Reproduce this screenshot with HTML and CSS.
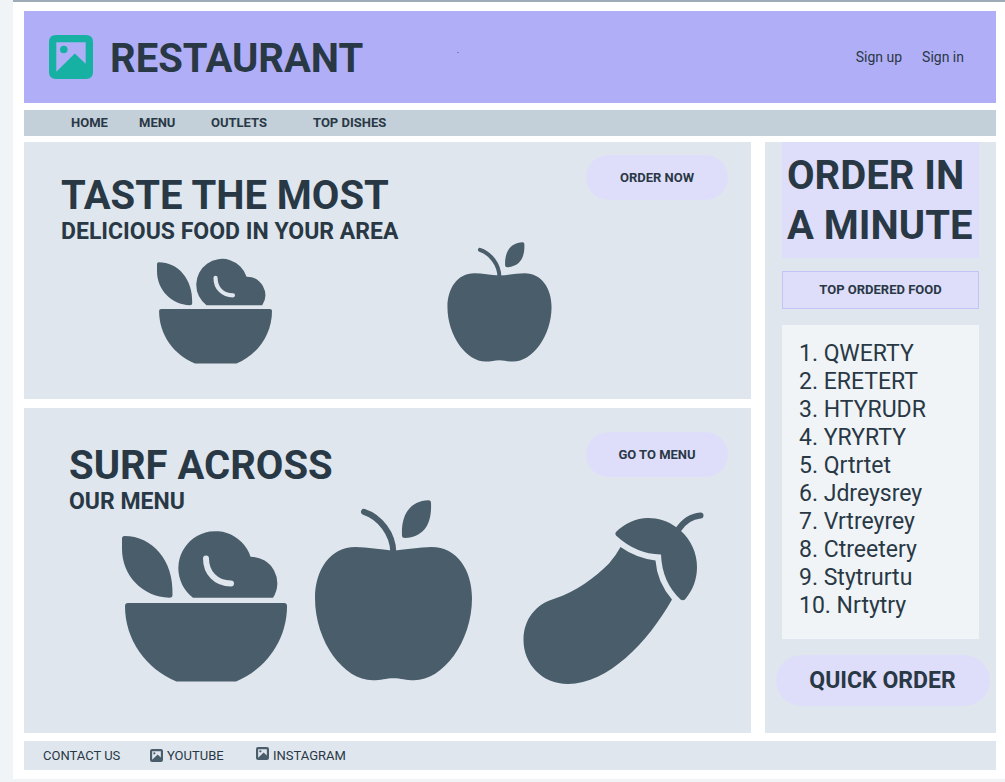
FILE: index.html
```
<!DOCTYPE html>
<html lang="en">
<head>
<meta charset="utf-8">
<title>Restaurant</title>
<link rel="stylesheet" href="styles.css">
</head>
<body>
<svg class="defs" aria-hidden="true">
  <symbol id="picture" viewBox="0 0 44 44">
    <path fill-rule="evenodd" d="M7 0H37Q44 0 44 7V37Q44 44 37 44H7Q0 44 0 37V7Q0 0 7 0ZM7.3 7.3V36.7L25.8 18.5L36.7 28.8V7.3Z"/>
    <circle cx="14.8" cy="14.5" r="3.8"/>
  </symbol>
  <symbol id="salad" viewBox="122 530 165 152">
    <path d="M124.5 536C152 536 174 560 172.500 595Q172.500 597.700 169.500 597.700C142 597 122 575 122 549V538.500Q122 536 124.500 536Z"/>
    <path d="M193 597.700A37 37 0 1 1 250.500 556.700A26.500 26.500 0 0 1 273 597.700Z"/>
    <path class="shine" d="M206 558.500C206 573 216 583.500 231 583.500"/>
    <path d="M128 603H284Q287 603 287 606C287 640 266 669 236 681.500H176.500C146 669 125 640 125 606Q125 603 128 603Z"/>
  </symbol>
  <symbol id="apple" viewBox="315 500 157 181">
    <path class="stem" d="M364 511.800C380 517 393 534 393.300 552"/>
    <path d="M428.500 500.300Q431 500.300 431 503C432 524 424 537 405 538Q402 538 402 535.500C401 516 409 501 428.500 500.300Z"/>
    <path d="M393.300 550.700C380 549.500 368 547 355.500 547C330 547 315 570 315 598C315 642 344 680.300 372.700 680.300C381 680.300 386 678.200 393.300 678.200C401 678.200 406 680.300 414 680.300C443 680.300 472 642 472 598C472 570 457 547 431.500 547C419 547 407 549.500 393.300 550.700Z"/>
  </symbol>
  <symbol id="eggplant" viewBox="523 512 181 172">
    <path class="stem" d="M678 530Q687 516.500 700.500 515.500"/>
    <path d="M616 532C624 524 636 518 648 518C658 518 668 521 676 527L681 531C691 540 697 553 697 567C697 579 693 590 685 599.500Q683 601 680.500 599.500Q662 582 661 554.500Q636 554 616 535.500Q614.500 533.500 616 532Z"/>
    <path d="M620.500 547Q636 558 655.500 560.500Q657 582 672 599.500C648 642 608 684 568 684C542 684 523.500 664 523.500 640C523.500 619 536 604 555 598.500C575 592 596 577 609 563.500Q616 555.500 620.500 547Z"/>
  </symbol>
</svg>

<div class="page">
  <header class="header">
    <svg class="logo" aria-hidden="true"><use href="#picture"/></svg>
    <h1 class="display">RESTAURANT</h1>
    <span class="speck"></span>
    <div class="account">
      <a href="#">Sign up</a>
      <a href="#">Sign in</a>
    </div>
  </header>

  <nav class="nav">
    <a href="#">HOME</a>
    <a href="#">MENU</a>
    <a href="#">OUTLETS</a>
    <a href="#">TOP DISHES</a>
  </nav>

  <div class="content">
    <main class="panels">
      <section class="panel panel-taste">
        <div class="panel-head">
          <div class="titles">
            <h2 class="display">TASTE THE MOST</h2>
            <p class="subtitle">DELICIOUS FOOD IN YOUR AREA</p>
          </div>
          <button class="pill" type="button">ORDER NOW</button>
        </div>
        <div class="art">
          <svg class="salad" aria-hidden="true"><use href="#salad"/></svg>
          <svg class="apple" aria-hidden="true"><use href="#apple"/></svg>
        </div>
      </section>

      <section class="panel panel-surf">
        <div class="panel-head">
          <div class="titles">
            <h2 class="display">SURF ACROSS</h2>
            <p class="subtitle">OUR MENU</p>
          </div>
          <button class="pill" type="button">GO TO MENU</button>
        </div>
        <div class="art">
          <svg class="salad" aria-hidden="true"><use href="#salad"/></svg>
          <svg class="apple" aria-hidden="true"><use href="#apple"/></svg>
          <svg class="eggplant" aria-hidden="true"><use href="#eggplant"/></svg>
        </div>
      </section>
    </main>

    <aside class="sidebar">
      <h2 class="display promo">ORDER IN<br>A MINUTE</h2>
      <h3 class="list-title">TOP ORDERED FOOD</h3>
      <ol class="dishes">
        <li>1. QWERTY</li>
        <li>2. ERETERT</li>
        <li>3. HTYRUDR</li>
        <li>4. YRYRTY</li>
        <li>5. Qrtrtet</li>
        <li>6. Jdreysrey</li>
        <li>7. Vrtreyrey</li>
        <li>8. Ctreetery</li>
        <li>9. Stytrurtu</li>
        <li>10. Nrtytry</li>
      </ol>
      <button class="pill pill-large" type="button">QUICK ORDER</button>
    </aside>
  </div>

  <footer class="footer">
    <a href="#">CONTACT US</a>
    <a href="#"><svg aria-hidden="true"><use href="#picture"/></svg>YOUTUBE</a>
    <a href="#"><svg class="raised" aria-hidden="true"><use href="#picture"/></svg>INSTAGRAM</a>
  </footer>
</div>
</body>
</html>
```
FILE: styles.css
```
:root {
  --ink: #293845;
  --slate: #4a5d6a;
  --panel: #dfe6ee;
  --lilac: #dfdefa;
  --mist: #f0f4f7;
}

* {
  box-sizing: border-box;
}

body {
  margin: 0;
  padding: 0 0 3px 13px;
  background: var(--mist);
  color: var(--ink);
  font: 13px/20px Roboto, sans-serif;
}

h1, h2, h3, p, ol {
  margin: 0;
  padding: 0;
}

a {
  color: inherit;
  text-decoration: none;
}

.defs {
  position: absolute;
  width: 0;
  height: 0;
}

.page {
  padding: 9px 9px 9px 11px;
  border-top: 2px solid #9eabb7;
  background: #fff;
}

.display {
  font-size: 40px;
  line-height: 48px;
  font-weight: 700;
}

.header {
  display: flex;
  align-items: center;
  gap: 17px;
  height: 92px;
  padding: 0 32px 0 25px;
  background: #b1aef8;
}

.header .display {
  padding-top: 3px;
}

.speck {
  width: 2px;
  height: 1px;
  margin: 0 0 10px 77px;
  background: #8583c0;
}

.logo {
  width: 44px;
  height: 44px;
  fill: #16b1a3;
}

.account {
  display: flex;
  gap: 20px;
  margin-left: auto;
  font-size: 14px;
}

.nav {
  display: grid;
  grid-template-columns: 68px 72px 102px auto;
  align-items: center;
  height: 26px;
  margin-top: 7px;
  padding-left: 47px;
  background: #c3cfd9;
  font-weight: 700;
}

.content {
  display: grid;
  grid-template-columns: 1fr 231px;
  gap: 14px;
  margin-top: 6px;
}

.panels {
  display: flex;
  flex-direction: column;
  gap: 9px;
}

.panel {
  padding: 13px 23px 0 37px;
  background: var(--panel);
}

.panel-taste {
  padding-bottom: 35px;
}

.panel-surf {
  flex: 1;
  padding: 24px 23px 49px 45px;
}

.panel-head {
  display: flex;
  justify-content: space-between;
  align-items: flex-start;
}

.titles {
  padding-top: 17px;
}

.panel-surf .titles {
  padding-top: 10px;
}

.subtitle {
  font-size: 23px;
  line-height: 24px;
  font-weight: 700;
}

.art {
  display: flex;
  align-items: flex-end;
}

.art svg {
  flex: none;
  fill: var(--slate);
}

.art .stem,
.stem,
.shine {
  fill: none;
  stroke: var(--slate);
  stroke-width: 6;
  stroke-linecap: round;
}

.shine {
  stroke: var(--panel);
}

.panel-taste .art {
  gap: 175px;
  margin-top: -2px;
  padding-left: 96px;
}

.panel-taste .salad {
  width: 115px;
  height: 106px;
}

.panel-taste .apple {
  width: 105px;
  height: 120px;
  margin-bottom: 2px;
}

.panel-surf .art {
  gap: 28px;
  margin-top: -14px;
  padding-left: 53px;
}

.panel-surf .salad {
  width: 165px;
  height: 152px;
  margin-bottom: 2px;
}

.panel-surf .apple {
  width: 157px;
  height: 181px;
  margin-bottom: 3px;
}

.panel-surf .eggplant {
  width: 181px;
  height: 172px;
  margin-left: 23px;
}

.pill {
  width: 142px;
  height: 45px;
  padding: 0;
  border: 0;
  border-radius: 26px;
  background: var(--lilac);
  color: inherit;
  font: 700 13px/20px Roboto, sans-serif;
}

.sidebar {
  display: flex;
  flex-direction: column;
  padding: 0 17px 27px;
  background: var(--panel);
}

.promo {
  padding: 9px 0 7px 5px;
  background: var(--lilac);
  line-height: 50px;
}

.list-title {
  margin-top: 13px;
  border: 1px solid #c5c3f5;
  background: var(--lilac);
  font-size: 13px;
  line-height: 36px;
  text-align: center;
}

.dishes {
  margin-top: 16px;
  padding: 15px 17px 19px;
  background: var(--mist);
  font-size: 23px;
  line-height: 28px;
  list-style: none;
}

.pill-large {
  align-self: center;
  width: 214px;
  height: 51px;
  margin: 16px 0 0 4px;
  font-size: 23px;
}

.footer {
  display: grid;
  grid-template-columns: 107px 106px auto;
  align-items: center;
  height: 29px;
  margin-top: 8px;
  padding-left: 19px;
  background: var(--panel);
}

.footer a {
  display: flex;
  align-items: center;
  gap: 4px;
}

.footer svg {
  width: 13px;
  height: 13px;
  fill: var(--slate);
}

.footer .raised {
  margin-bottom: 4px;
}
```
